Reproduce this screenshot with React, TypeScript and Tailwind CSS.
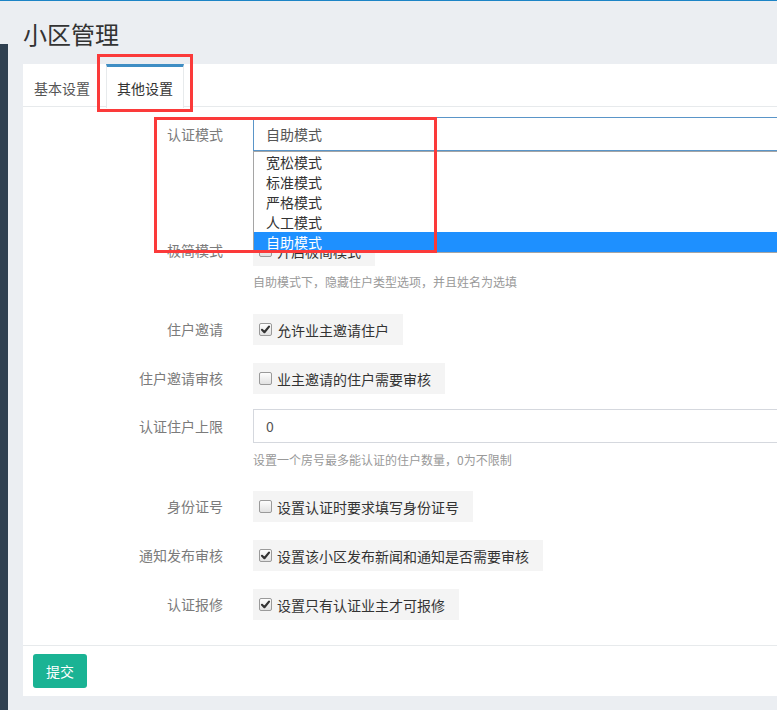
const font = '"Noto Sans CJK SC", "Noto Sans", sans-serif';

function Check({ on }: { on: boolean }) {
  return (
    <span className="w-[13px] h-[13px] rounded-[2px] border border-[#9a9a9a] bg-gradient-to-b from-[#fdfdfd] to-[#e2e2e2] flex items-center justify-center shrink-0">
      {on && (
        <svg width="11" height="11" viewBox="0 0 11 11">
          <path d="M2 5.8 L4.4 8.2 L9 2.6" fill="none" stroke="#333" strokeWidth="2.2" strokeLinecap="round" strokeLinejoin="round" />
        </svg>
      )}
    </span>
  );
}

function CheckBox({ on, text }: { on: boolean; text: string }) {
  return (
    <div className="inline-flex items-center h-[31px] bg-[#f4f4f4] pl-[6px] pr-[14px] gap-[5px] text-[14px] leading-[20px] text-[#333]">
      <Check on={on} />
      <span>{text}</span>
    </div>
  );
}

function Row({ label, top, children, pt = 'pt-[5px]' }: { label: string; top: string; children: React.ReactNode; pt?: string }) {
  return (
    <div className={`flex ${top}`}>
      <div className={`w-[200px] shrink-0 text-right text-[14px] leading-[20px] text-[#7b7b7b] ${pt}`}>{label}</div>
      <div className="ml-[30px] flex-1 relative">{children}</div>
    </div>
  );
}

const modes = ['宽松模式', '标准模式', '严格模式', '人工模式', '自助模式'];

export default function App() {
  return (
    <div
      className="relative w-[777px] h-[710px] overflow-hidden bg-[#ebeef2] border-t border-[#1c84c6] flex"
      style={{ fontFamily: font }}
    >
      <div className="w-[8px] shrink-0 pt-[43px] flex flex-col">
        <div className="flex-1 bg-[#2f4050]" />
      </div>

      <div className="pl-[15px]">
        <h1 className="pt-[19px] pb-[16px] text-[24px] leading-[28px] text-[#333] font-normal">小区管理</h1>

        <div className="bg-white w-[790px] pb-[8px]">
          {/* tabs */}
          <div className="flex h-[43px] border-b border-[#e7eaec]">
            <div className="pl-[11px] pr-[16px] pt-[14px] text-[14px] leading-[20px] text-[#555]">基本设置</div>
            <div className="h-[44px] border-t-[3px] border-t-[#3f8ec4] border-x border-x-[#e7eaec] bg-white px-[10px] pt-[11px] text-[14px] leading-[20px] text-[#333]">
              其他设置
            </div>
          </div>

          {/* form */}
          <div className="pt-[10px]">
            <Row label="认证模式" top="" pt="pt-[7px]">
              <div className="h-[34px] border border-[#5a95c8] pl-[12px] text-[14px] leading-[32px] text-[#555]">自助模式</div>
              <div className="absolute z-10 top-[34px] left-0 right-0 bg-white border border-[#a5a5a5] text-[14px] leading-[20px] text-[#333]">
                {modes.map((m, i) => (
                  <div key={m} className={i === 4 ? 'pl-[12px] bg-[#1e90ff] text-white' : 'pl-[12px]'}>{m}</div>
                ))}
              </div>
            </Row>

            <Row label="极简模式" top="mt-[84px]">
              <CheckBox on={false} text="开启极简模式" />
              <div className="mt-[7px] text-[12px] leading-[17px] text-[#999]">自助模式下，隐藏住户类型选项，并且姓名为选填</div>
            </Row>

            <Row label="住户邀请" top="mt-[24px]">
              <CheckBox on text="允许业主邀请住户" />
            </Row>

            <Row label="住户邀请审核" top="mt-[18px]">
              <CheckBox on={false} text="业主邀请的住户需要审核" />
            </Row>

            <Row label="认证住户上限" top="mt-[15px]" pt="pt-[7px]">
              <div className="h-[34px] border border-[#d5d8de] pl-[12px] text-[14px] leading-[32px] text-[#555]">0</div>
              <div className="mt-[8px] text-[12px] leading-[17px] text-[#999]">设置一个房号最多能认证的住户数量，0为不限制</div>
            </Row>

            <Row label="身份证号" top="mt-[23px]">
              <CheckBox on={false} text="设置认证时要求填写身份证号" />
            </Row>

            <Row label="通知发布审核" top="mt-[18px]">
              <CheckBox on text="设置该小区发布新闻和通知是否需要审核" />
            </Row>

            <Row label="认证报修" top="mt-[18px]">
              <CheckBox on text="设置只有认证业主才可报修" />
            </Row>
          </div>

          <div className="mt-[25px] border-t border-[#e7eaec]" />
          <div className="pl-[10px] pt-[8px]">
            <button className="w-[54px] h-[34px] rounded-[3px] bg-[#1ab394] text-white text-[14px] leading-[20px]">提交</button>
          </div>
        </div>
      </div>

      {/* annotation boxes */}
      <div className="absolute left-[97px] top-[53px] w-[96px] h-[58px] border-[3px] border-[#fb3a3a] pointer-events-none" />
      <div className="absolute left-[154px] top-[116px] w-[283px] h-[136px] border-[3px] border-[#fb3a3a] pointer-events-none z-20" />
    </div>
  );
}
